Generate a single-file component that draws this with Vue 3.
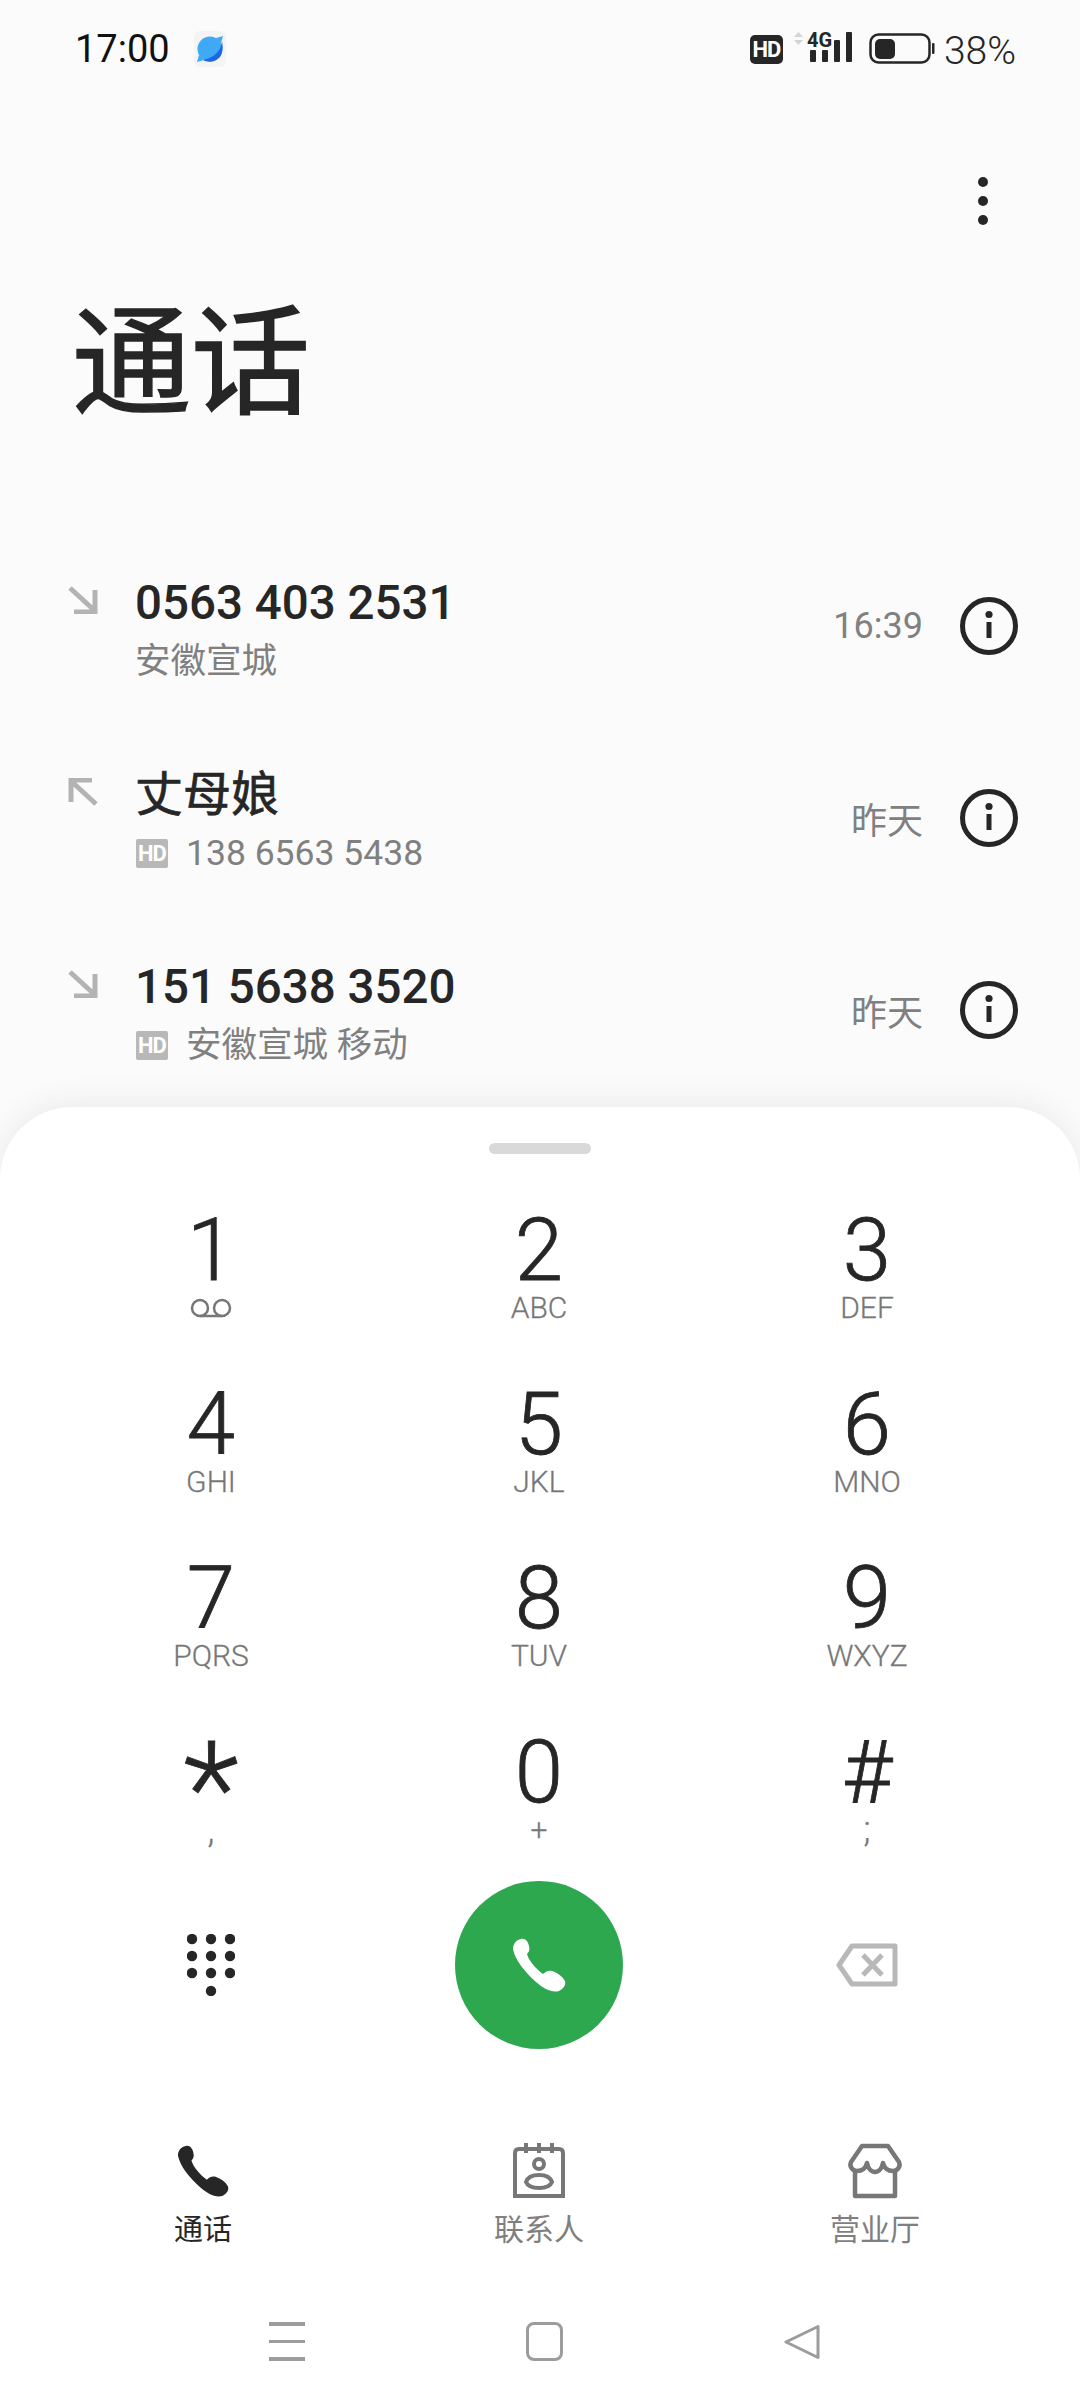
<script setup>
const calls = [
  { name: '0563 403 2531', sub: '安徽宣城', hd: false, out: false, time: '16:39' },
  { name: '丈母娘', sub: '138 6563 5438', hd: true, out: true, time: '昨天', cjk: true },
  { name: '151 5638 3520', sub: '安徽宣城 移动', hd: true, out: false, time: '昨天' },
]
const keys = [
  { d: '1', vm: true }, { d: '2', l: 'ABC' }, { d: '3', l: 'DEF' },
  { d: '4', l: 'GHI' }, { d: '5', l: 'JKL' }, { d: '6', l: 'MNO' },
  { d: '7', l: 'PQRS' }, { d: '8', l: 'TUV' }, { d: '9', l: 'WXYZ' },
  { d: '*', l: ',', star: true, punct: true }, { d: '0', l: '+' }, { d: '#', l: ';', punct: true },
]
const dots = [[5,5],[24,5],[43,5],[5,22],[24,22],[43,22],[5,39],[24,39],[43,39],[24,57]]
const phone = 'M9 1C13 0 16 3 17 8C18 12 17 14 15 16C17 23 24 31 31 36C34 33 37 32 40 33C46 35 50 38 53 43C54 47 52 50 47 53C40 55 32 51 24 44C13 34 3 22 1 11C1 6 4 2 9 1Z'
</script>

<template>
  <div class="page">
    <section class="top">
      <header class="status">
        <span class="clock">17:00</span>
        <span class="appicon">
          <svg width="28" height="28" viewBox="0 0 28 28">
            <path d="M20 3L27 1L25 8Z M3 20L1 27L8 25Z" fill="#3fa9f5" />
            <circle cx="14" cy="14" r="12.5" fill="#3fa9f5" />
            <path d="M26 6C25 16 18 23 7 25C12 28 20 27 24 22C27 18 27 11 26 6Z" fill="#1f66e5" />
          </svg>
        </span>
        <span class="status-right">
          <span class="hd-dark">HD</span>
          <svg class="signal" width="64" height="34" viewBox="0 0 64 34">
            <path d="M2 5L6.5 0L11 5Z M2 8L11 8L6.5 13Z" fill="#d4d4d4" />
            <text x="15" y="15" class="fourg">4G</text>
            <rect x="18" y="18" width="6" height="12" rx="1" fill="#262626" />
            <rect x="30" y="18" width="6" height="12" rx="1" fill="#262626" />
            <rect x="42" y="8" width="6" height="22" rx="1" fill="#262626" />
            <rect x="54" y="0" width="6" height="30" rx="1" fill="#262626" />
          </svg>
          <svg class="battery" width="66" height="32" viewBox="0 0 66 32">
            <rect x="1.5" y="1.5" width="59" height="28" rx="8" fill="none" stroke="#262626" stroke-width="2.5" />
            <rect x="6" y="6" width="20" height="20" rx="5" fill="#262626" />
            <rect x="63" y="10" width="2.5" height="11" rx="1" fill="#262626" />
          </svg>
          <span class="pct">38%</span>
        </span>
      </header>

      <div class="menu-row">
        <span class="kebab"><i></i><i></i><i></i></span>
      </div>

      <h1 class="title">通话</h1>

      <ul class="calls">
        <li v-for="c in calls" :key="c.name" class="call">
          <svg class="dir" width="30" height="28" viewBox="0 0 30 28" :class="{ out: c.out }">
            <path d="M2 2L27 25M27 4V26H6" fill="none" stroke="#b3b3b3" stroke-width="5" />
          </svg>
          <div class="who">
            <div class="name" :class="{ cjk: c.cjk }">{{ c.name }}</div>
            <div class="sub">
              <span v-if="c.hd" class="hd-light">HD</span>
              <span>{{ c.sub }}</span>
            </div>
          </div>
          <span class="when">{{ c.time }}</span>
          <svg class="info" width="60" height="60" viewBox="0 0 60 60">
            <circle cx="30" cy="30" r="26.5" fill="none" stroke="#262626" stroke-width="5" />
            <circle cx="30" cy="18.5" r="3.6" fill="#262626" />
            <rect x="27.5" y="26" width="5" height="16" fill="#262626" />
          </svg>
        </li>
      </ul>
    </section>

    <section class="sheet">
      <div class="handle"></div>
      <div class="keys">
        <div v-for="k in keys" :key="k.d" class="key">
          <span class="digit" :class="{ star: k.star }">{{ k.d }}</span>
          <svg v-if="k.vm" class="vm" width="44" height="20" viewBox="0 0 44 20">
            <circle cx="11" cy="10" r="8" fill="none" stroke="#777" stroke-width="2.5" />
            <circle cx="33" cy="10" r="8" fill="none" stroke="#777" stroke-width="2.5" />
            <path d="M11 18H33" stroke="#777" stroke-width="2.5" />
          </svg>
          <span v-else class="letters" :class="{ punct: k.punct }">{{ k.l }}</span>
        </div>
      </div>

      <div class="actions">
        <svg width="48" height="62" viewBox="0 0 48 62">
          <circle v-for="(p, i) in dots" :key="i" :cx="p[0]" :cy="p[1]" r="5.2" fill="#262626" />
        </svg>
        <button class="call-btn">
          <svg width="54" height="54" viewBox="0 0 54 54"><path :d="phone" fill="#fff" /></svg>
        </button>
        <svg width="62" height="44" viewBox="0 0 62 44">
          <path d="M16 3H59V41H16L3 22Z" fill="none" stroke="#b8b8b8" stroke-width="5" stroke-linejoin="round" />
          <path d="M27 12L46 32M46 12L27 32" stroke="#b8b8b8" stroke-width="5" />
        </svg>
      </div>

      <nav class="tabs">
        <div class="tab active">
          <svg width="52" height="56" viewBox="0 0 54 54"><path :d="phone" fill="#262626" /></svg>
          <span>通话</span>
        </div>
        <div class="tab">
          <svg width="54" height="56" viewBox="0 0 54 56" fill="none" stroke="#777" stroke-width="4">
            <path d="M3 53V10Q3 6 7 6H47Q51 6 51 10V53Z" />
            <path d="M14 0V10M27 0V10M40 0V10" />
            <circle cx="27" cy="21" r="5" />
            <path d="M14 39C16 33 22 32 27 32C32 32 38 33 40 39C38 44 32 45 27 45C22 45 16 44 14 39Z" />
          </svg>
          <span>联系人</span>
        </div>
        <div class="tab">
          <svg width="56" height="56" viewBox="0 0 56 56" fill="none" stroke="#777" stroke-width="4.5" stroke-linejoin="round">
            <path d="M15 3H41L52 19C54 24 50 28 46 28C41 28 37 25 36 20C35 25 32 29 28 29C24 29 21 25 20 20C19 25 15 28 10 28C6 28 2 24 4 19Z" />
            <path d="M8 28V53H48V28" />
          </svg>
          <span>营业厅</span>
        </div>
      </nav>

      <div class="sysnav">
        <span class="burger"><i></i><i></i><i></i></span>
        <span class="square"></span>
        <svg width="36" height="36" viewBox="0 0 36 36">
          <path d="M34 2.5V33.5L2 18Z" fill="none" stroke="#9c9c9c" stroke-width="3" stroke-linejoin="round" />
        </svg>
      </div>
    </section>
  </div>
</template>

<style>
html, body { margin: 0; padding: 0; background: #fbfbfb; }
</style>

<style scoped>
.page {
  width: 1080px;
  height: 2408px;
  background: #fbfbfb;
  display: flex;
  flex-direction: column;
  overflow: hidden;
  font-family: Roboto, "Noto Sans CJK SC", sans-serif;
  color: #262626;
}
.top { height: 1107px; display: flex; flex-direction: column; }
.status {
  display: flex;
  align-items: center;
  height: 34px;
  margin-top: 32px;
  padding: 0 64px 0 75px;
}
.clock { font-size: 38px; line-height: 34px; color: #111; }
.appicon {
  margin-left: 24px;
  width: 32px;
  height: 36px;
  display: flex;
  align-items: center;
  justify-content: center;
  background: #f4f4f4;
  border-radius: 6px;
}
.status-right { margin-left: auto; display: flex; align-items: center; }
.hd-dark {
  width: 33px;
  height: 29px;
  border-radius: 5px;
  background: #262626;
  color: #fff;
  font-size: 22px;
  font-weight: 700;
  line-height: 29px;
  text-align: center;
  letter-spacing: -1px;
}
.signal { margin-left: 9px; overflow: visible; }
.fourg { font-family: Roboto, sans-serif; font-size: 20px; font-weight: 700; fill: #262626; }
.battery { margin-left: 13px; }
.pct { margin-left: 9px; padding-top: 4px; font-size: 39px; font-weight: 300; line-height: 34px; }

.menu-row { display: flex; justify-content: flex-end; padding: 111px 92px 0 0; }
.kebab { display: flex; flex-direction: column; gap: 9px; }
.kebab i { width: 10px; height: 10px; border-radius: 50%; background: #262626; }

.title {
  margin: 76px 0 0 72px;
  font-size: 119px;
  font-weight: 400;
  line-height: 128px;
  color: #262626;
  -webkit-text-stroke: 1.5px #262626;
}
.calls { list-style: none; margin: 101px 0 0; padding: 0; }
.call {
  height: 192px;
  display: flex;
  align-items: center;
  padding: 0 61px 0 68px;
}
.dir { align-self: flex-start; margin-top: 56px; }
.dir.out { transform: rotate(180deg); }
.who { margin-left: 37px; flex: 1; padding-top: 12px; }
.name { font-size: 47.5px; font-weight: 500; line-height: 58px; color: #262626; }
.name.cjk { font-size: 48px; font-weight: 400; -webkit-text-stroke: 0.7px #262626; }
.sub {
  display: flex;
  align-items: center;
  font-size: 35.5px;
  line-height: 58px;
  color: #808080;
}
.hd-light {
  width: 32px;
  height: 29px;
  margin: 0 18px 0 1px;
  border-radius: 2px;
  background: #b8b8b8;
  color: #fff;
  font-size: 22px;
  font-weight: 700;
  line-height: 29px;
  text-align: center;
  letter-spacing: -1px;
}
.when { font-size: 36px; color: #808080; margin-right: 36px; }

.sheet {
  flex: 1;
  background: #fff;
  border-radius: 72px 72px 0 0;
  box-shadow: 0 -4px 32px rgba(0, 0, 0, 0.07);
  display: flex;
  flex-direction: column;
}
.handle {
  width: 102px;
  height: 11px;
  margin: 36px auto 0;
  border-radius: 6px;
  background: #d9d9d9;
}
.keys {
  margin-top: 52px;
  padding: 0 47px;
  display: grid;
  grid-template-columns: repeat(3, 328px);
  grid-auto-rows: 117px;
  row-gap: 57px;
}
.key { display: flex; flex-direction: column; align-items: center; }
.digit {
  font-size: 87px;
  font-weight: 300;
  line-height: 87px;
  height: 87px;
  margin-top: 1px;
  margin-bottom: -1px;
  color: #262626;
  -webkit-text-stroke: 0.8px #262626;
}
.digit.star { font-size: 130px; line-height: 130px; height: 87px; margin-top: -3px; margin-bottom: 3px; }
.letters { font-size: 30px; font-weight: 300; line-height: 30px; color: #777; -webkit-text-stroke: 0.3px #777; }
.letters.punct { font-size: 36px; }
.vm { margin-top: 5px; }

.actions {
  margin-top: 36px;
  padding: 0 47px;
  display: grid;
  grid-template-columns: repeat(3, 328px);
  justify-items: center;
  align-items: center;
}
.call-btn {
  width: 168px;
  height: 168px;
  border: 0;
  padding: 0;
  border-radius: 50%;
  background: #2ea84f;
  display: flex;
  align-items: center;
  justify-content: center;
}

.tabs {
  margin-top: 94px;
  padding: 0 35px;
  display: grid;
  grid-template-columns: repeat(3, 336px);
}
.tab {
  display: flex;
  flex-direction: column;
  align-items: center;
  font-size: 30px;
  line-height: 40px;
  color: #7f7f7f;
}
.tab span { margin-top: 11px; }
.tab.active { color: #262626; font-size: 29px; }

.sysnav {
  margin-top: 72px;
  display: flex;
  justify-content: center;
  align-items: center;
  gap: 221px;
  padding-left: 8px;
}
.burger { width: 36px; display: flex; flex-direction: column; gap: 14px; }
.burger i { height: 3.5px; background: #9c9c9c; }
.square {
  width: 31px;
  height: 33px;
  border: 3px solid #9c9c9c;
  border-radius: 8px;
}
</style>
